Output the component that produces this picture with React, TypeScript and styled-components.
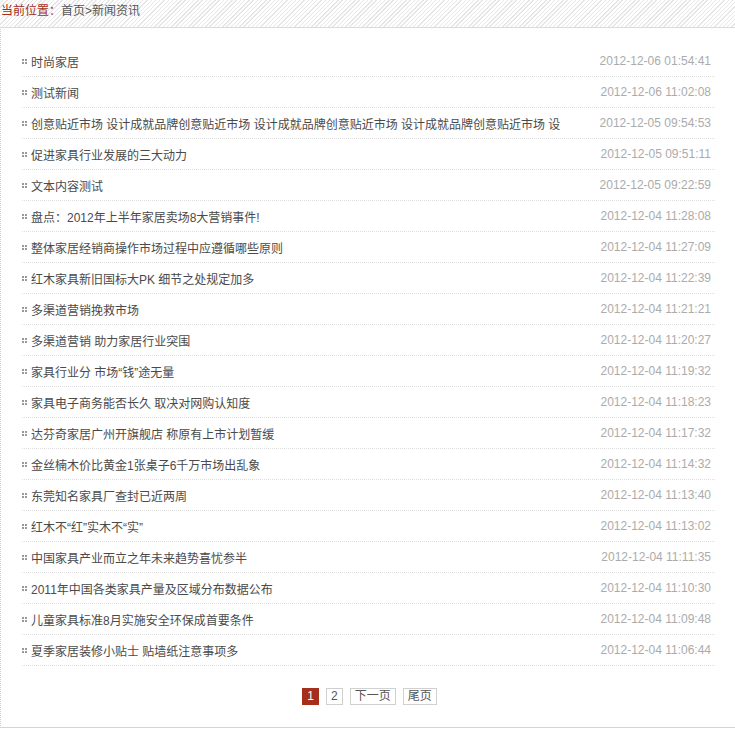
import React from 'react'
import styled, { createGlobalStyle } from 'styled-components'

const GlobalStyle = createGlobalStyle`
  html, body {
    margin: 0;
    padding: 0;
    background: #fff;
  }
  body {
    font-family: "Liberation Sans", "Noto Sans CJK SC", sans-serif;
    font-size: 12px;
    color: #333;
  }
`

const Page = styled.div`
  width: 735px;
  height: 730px;
  overflow: hidden;
`

const Crumbs = styled.div`
  height: 27px;
  line-height: 23px;
  padding-left: 1px;
  font-family: "Liberation Sans", "Noto Sans CJK SC", sans-serif;
  font-size: 12px;
  color: #555;
  background: repeating-linear-gradient(-45deg, #fff 0, #fff 2px, #e6e6e6 2px, #e6e6e6 3px);
`

const CrumbLabel = styled.span`
  color: #a3301c;
`

const Panel = styled.div`
  height: 701px;
  border-top: 1px solid #dcdcdc;
  border-left: 1px dotted #cfcfcf;
  border-bottom: 1px solid #d4d4d4;
  padding: 18px 20px 0 21px;
  box-sizing: border-box;
`

const List = styled.ul`
  list-style: none;
  margin: 0;
  padding: 0;
`

const Row = styled.li`
  display: flex;
  align-items: center;
  justify-content: space-between;
  height: 30px;
  border-bottom: 1px dotted #dedede;
  padding-right: 4px;
`

const Title = styled.a`
  display: flex;
  align-items: center;
  gap: 4px;
  color: #4a4a4a;
  text-decoration: none;
  white-space: nowrap;
  font-family: "Liberation Sans", "Noto Sans CJK SC", sans-serif;
`

const Stamp = styled.span`
  color: #ababab;
  font-family: "Liberation Sans", Arial, sans-serif;
  white-space: nowrap;
  margin-left: 12px;
`

const Pager = styled.div`
  display: flex;
  justify-content: center;
  gap: 7px;
  margin-top: 22px;
  padding-left: 2px;
`

const PageLink = styled.a<{ active?: boolean }>`
  display: inline-block;
  height: 15px;
  line-height: 15px;
  padding: 0 4px;
  border: 1px solid ${({ active }) => (active ? '#a4301c' : '#d0d0d0')};
  background: ${({ active }) => (active ? '#a4301c' : '#fff')};
  color: ${({ active }) => (active ? '#fff' : '#555')};
  font-size: 12px;
  text-decoration: none;
`

const Dots = () => (
  <svg width="5" height="5" viewBox="0 0 5 5">
    <rect x="0" y="0" width="2" height="2" fill="#999" />
    <rect x="3" y="0" width="2" height="2" fill="#999" />
    <rect x="0" y="3" width="2" height="2" fill="#999" />
    <rect x="3" y="3" width="2" height="2" fill="#999" />
  </svg>
)

const news = [
  ['时尚家居', '2012-12-06 01:54:41'],
  ['测试新闻', '2012-12-06 11:02:08'],
  ['创意贴近市场 设计成就品牌创意贴近市场 设计成就品牌创意贴近市场 设计成就品牌创意贴近市场 设', '2012-12-05 09:54:53'],
  ['促进家具行业发展的三大动力', '2012-12-05 09:51:11'],
  ['文本内容测试', '2012-12-05 09:22:59'],
  ['盘点：2012年上半年家居卖场8大营销事件!', '2012-12-04 11:28:08'],
  ['整体家居经销商操作市场过程中应遵循哪些原则', '2012-12-04 11:27:09'],
  ['红木家具新旧国标大PK 细节之处规定加多', '2012-12-04 11:22:39'],
  ['多渠道营销挽救市场', '2012-12-04 11:21:21'],
  ['多渠道营销 助力家居行业突围', '2012-12-04 11:20:27'],
  ['家具行业分 市场“钱”途无量', '2012-12-04 11:19:32'],
  ['家具电子商务能否长久 取决对网购认知度', '2012-12-04 11:18:23'],
  ['达芬奇家居广州开旗舰店 称原有上市计划暂缓', '2012-12-04 11:17:32'],
  ['金丝楠木价比黄金1张桌子6千万市场出乱象', '2012-12-04 11:14:32'],
  ['东莞知名家具厂查封已近两周', '2012-12-04 11:13:40'],
  ['红木不“红”实木不“实”', '2012-12-04 11:13:02'],
  ['中国家具产业而立之年未来趋势喜忧参半', '2012-12-04 11:11:35'],
  ['2011年中国各类家具产量及区域分布数据公布', '2012-12-04 11:10:30'],
  ['儿童家具标准8月实施安全环保成首要条件', '2012-12-04 11:09:48'],
  ['夏季家居装修小贴士 贴墙纸注意事项多', '2012-12-04 11:06:44'],
]

const App = () => (
  <Page>
    <GlobalStyle />
    <Crumbs>
      <CrumbLabel>当前位置：</CrumbLabel>首页&gt;新闻资讯
    </Crumbs>
    <Panel>
      <List>
        {news.map(([title, date]) => (
          <Row key={title}>
            <Title href="#">
              <Dots />
              {title}
            </Title>
            <Stamp>{date}</Stamp>
          </Row>
        ))}
      </List>
      <Pager>
        <PageLink active href="#">1</PageLink>
        <PageLink href="#">2</PageLink>
        <PageLink href="#">下一页</PageLink>
        <PageLink href="#">尾页</PageLink>
      </Pager>
    </Panel>
  </Page>
)

export default App
